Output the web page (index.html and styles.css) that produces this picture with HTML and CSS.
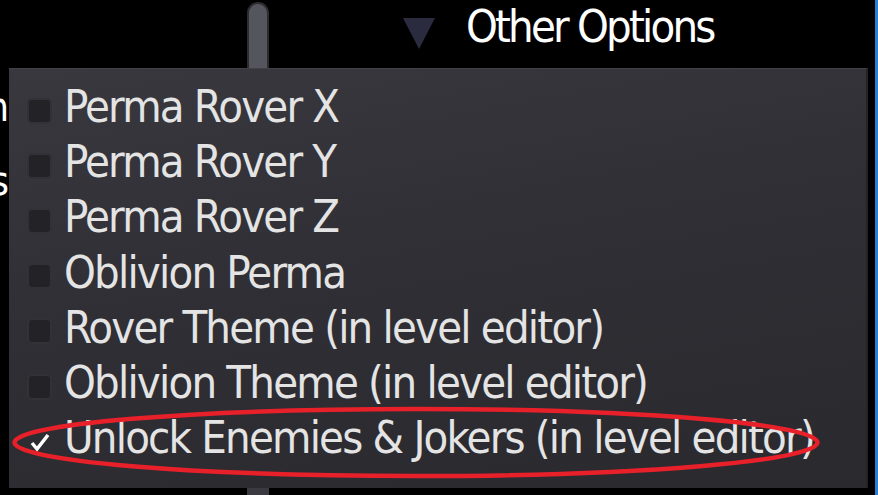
FILE: index.html
```html
<!DOCTYPE html>
<html lang="en">
<head>
    <meta charset="UTF-8">
    <title>Other Options</title>
    <link rel="stylesheet" href="styles.css">
</head>
<body>
<div class="stage">
    <!-- page behind the dropdown -->
    <div class="backdrop">
        <div class="top-bar">
            <div class="scroll-thumb"></div>
            <div class="section-toggle">
                <svg class="arrow" viewBox="0 0 32 32">
                    <polygon points="0,0 32,0 16,31" fill="#2b2b40"/>
                </svg>
                <span class="section-title">Other Options</span>
            </div>
        </div>
        <div class="side-labels">
            <div class="side-label">m</div>
            <div class="side-label">s</div>
        </div>
        <div class="scroll-thumb-end"></div>
    </div>

    <!-- Dropdown -->
    <div class="dropdown">
        <label class="option"><span class="box"></span>Perma Rover X</label>
        <label class="option"><span class="box"></span>Perma Rover Y</label>
        <label class="option"><span class="box"></span>Perma Rover Z</label>
        <label class="option"><span class="box"></span>Oblivion Perma</label>
        <label class="option"><span class="box"></span>Rover Theme (in level editor)</label>
        <label class="option"><span class="box"></span>Oblivion Theme (in level editor)</label>
        <label class="option checked">
            <span class="box">
                <svg class="tick" viewBox="0 0 20 20"><polyline points="2,11 7,17 18,3" fill="none" stroke="#fff" stroke-width="3.5"/></svg>
            </span>Unlock Enemies &amp; Jokers (in level editor)
        </label>
    </div>

    <svg class="highlight" viewBox="0 0 878 495">
        <ellipse cx="416" cy="442.5" rx="401.5" ry="33.5" fill="none" stroke="#e8202a" stroke-width="4.5"/>
    </svg>

    <div class="edge"></div>
</div>
</body>
</html>
```

FILE: styles.css
```css
body {
    margin: 0;
    background: #000;
    overflow: hidden;
    font-family: "DejaVu Sans", sans-serif;
    font-stretch: condensed;
}
.stage {
    width: 878px;
    height: 495px;
    position: relative;
    overflow: hidden;
}
.backdrop {
    height: 100%;
    display: flex;
    flex-direction: column;
}
.top-bar {
    display: flex;
    align-items: flex-start;
    height: 68px;
}
.scroll-thumb {
    width: 22px;
    height: 70px;
    margin: 2px 0 0 247px;
    background: #55555d;
    border: 2px solid #2c2c32;
    border-bottom: none;
    border-radius: 11px 11px 0 0;
    box-sizing: border-box;
}
.section-toggle {
    display: flex;
    align-items: center;
    margin: 0 0 0 134px;
}
.arrow {
    width: 32px;
    height: 32px;
    margin-top: 16px;
}
.section-title {
    margin: 2px 0 0 31px;
    color: #fff;
    font-size: 45px;
    letter-spacing: -2.8px;
    line-height: 50px;
}
.side-labels {
    flex: 1;
    width: 9px;
    overflow: hidden;
    display: flex;
    flex-direction: column;
    align-items: flex-end;
    padding-top: 14px;
    gap: 24px;
}
.side-label {
    color: #fff;
    font-size: 40px;
    line-height: 50px;
}
.scroll-thumb-end {
    width: 22px;
    height: 8px;
    margin-left: 247px;
    background: #3a3a40;
}
.dropdown {
    position: absolute;
    left: 9px;
    top: 68px;
    width: 859px;
    height: 420px;
    box-sizing: border-box;
    padding: 10px 0 0 18px;
    background: linear-gradient(170deg, #38383e 0%, #2f2f35 45%, #29292e 100%);
    border-top: 1px solid #414147;
    border-right: 2px solid #232328;
    display: flex;
    flex-direction: column;
}
.option {
    display: flex;
    align-items: center;
    height: 55.2px;
    color: #e4e4e4;
    font-size: 45px;
    letter-spacing: -1.8px;
    white-space: nowrap;
}
.box {
    flex: none;
    width: 25px;
    height: 26px;
    margin: 8px 12px 0 0;
    box-sizing: border-box;
    border: 2px solid #313137;
    border-radius: 5px;
    background: #232327;
    display: flex;
    align-items: center;
    justify-content: center;
}
.checked .box {
    background: none;
    border-color: transparent;
}
.tick {
    flex: none;
    width: 20px;
    height: 20px;
}
.highlight {
    position: absolute;
    left: 0;
    top: 0;
    width: 878px;
    height: 495px;
}
.edge {
    position: absolute;
    right: 0;
    top: 0;
    width: 3px;
    height: 495px;
    background: #2b7fd2;
}
```
